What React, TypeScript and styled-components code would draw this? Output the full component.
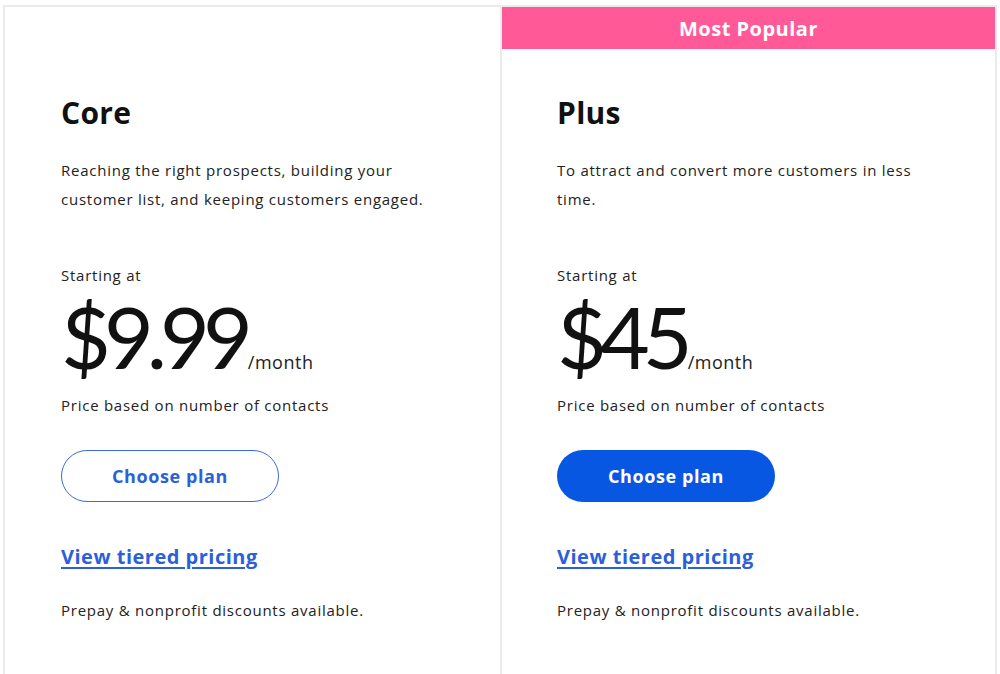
import React from 'react';
import styled, { createGlobalStyle } from 'styled-components';

const GlobalStyle = createGlobalStyle`
  html, body { margin: 0; padding: 0; background: #fff; }
  body { font-family: "Open Sans", "Noto Sans", Arial, sans-serif; color: #1b1b1b; }
`;

const Page = styled.main`
  padding: 5px 3px 0 3px;
  height: 669px;
  overflow: hidden;
`;

const Grid = styled.div`
  display: grid;
  grid-template-columns: 495px 1fr;
  border-top: 2px solid #ebebeb;
  border-left: 2px solid #ebebeb;
  border-right: 2px solid #ebebeb;
  width: 994px;
  height: 100%;
  box-sizing: border-box;
`;

const Card = styled.section<{ $first?: boolean }>`
  display: flex;
  flex-direction: column;
  border-left: ${({ $first }) => ($first ? 'none' : '2px solid #ebebeb')};
`;

const Banner = styled.div<{ $show: boolean }>`
  height: 42px;
  display: flex;
  align-items: center;
  justify-content: center;
  background: ${({ $show }) => ($show ? '#ff5a97' : 'transparent')};
  color: #fff;
  font-size: 20px;
  font-weight: 700;
  letter-spacing: 0.5px;
`;

const Body = styled.div<{ $first?: boolean }>`
  padding: 0 40px 0 ${({ $first }) => ($first ? '56px' : '55px')};
`;

const Title = styled.h2`
  margin: 45px 0 0;
  font-size: 30px;
  line-height: 38px;
  font-weight: 700;
  letter-spacing: 0.3px;
  color: #111;
`;

const Desc = styled.p`
  margin: 24px 0 0;
  font-size: 15px;
  line-height: 29px;
  letter-spacing: 0.75px;
  color: #222;
  max-width: 372px;
`;

const Small = styled.p<{ $gap: number }>`
  margin: ${({ $gap }) => $gap}px 0 0;
  font-size: 15px;
  line-height: 24px;
  letter-spacing: 0.75px;
  color: #222;
`;

const PriceRow = styled.div`
  display: flex;
  align-items: baseline;
  margin-top: 6px;
  height: 86px;
`;

const Amount = styled.span`
  font-family: Lato, "Noto Sans", sans-serif;
  font-size: 86px;
  line-height: 86px;
  font-weight: 400;
  letter-spacing: -7px;
  color: #111;
`;

const Per = styled.span`
  font-size: 18px;
  letter-spacing: 0.5px;
  color: #222;
  margin-left: 2px;
`;

const PlanButton = styled.button<{ $solid?: boolean }>`
  margin-top: 33px;
  width: 218px;
  height: 52px;
  border-radius: 26px;
  font-family: "Open Sans", "Noto Sans", sans-serif;
  font-size: 18px;
  font-weight: 700;
  letter-spacing: 0.6px;
  cursor: pointer;
  background: ${({ $solid }) => ($solid ? '#0757e3' : '#fff')};
  color: ${({ $solid }) => ($solid ? '#fff' : '#2c5fd8')};
  border: ${({ $solid }) => ($solid ? 'none' : '1.5px solid #3a6ae0')};
`;

const Tiered = styled.a`
  display: block;
  margin-top: 40px;
  font-size: 20px;
  line-height: 30px;
  font-weight: 700;
  letter-spacing: 0.5px;
  color: #2c5fd8;
  text-decoration: underline;
  text-underline-offset: 3px;
`;

const plans = [
  {
    name: 'Core',
    desc: 'Reaching the right prospects, building your customer list, and keeping customers engaged.',
    price: '$9.99',
    popular: false,
  },
  {
    name: 'Plus',
    desc: 'To attract and convert more customers in less time.',
    price: '$45',
    popular: true,
  },
];

export default function App() {
  return (
    <>
      <GlobalStyle />
      <Page>
        <Grid>
          {plans.map((p, i) => (
            <Card key={p.name} $first={i === 0}>
              <Banner $show={p.popular}>{p.popular ? 'Most Popular' : ''}</Banner>
              <Body $first={i === 0}>
                <Title>{p.name}</Title>
                <Desc>{p.desc}</Desc>
                <Small $gap={49}>Starting at</Small>
                <PriceRow>
                  <Amount>{p.price}</Amount>
                  <Per>/month</Per>
                </PriceRow>
                <Small $gap={14}>Price based on number of contacts</Small>
                <PlanButton $solid={p.popular}>Choose plan</PlanButton>
                <Tiered href="#">View tiered pricing</Tiered>
                <Small $gap={26}>Prepay &amp; nonprofit discounts available.</Small>
              </Body>
            </Card>
          ))}
        </Grid>
      </Page>
    </>
  );
}
